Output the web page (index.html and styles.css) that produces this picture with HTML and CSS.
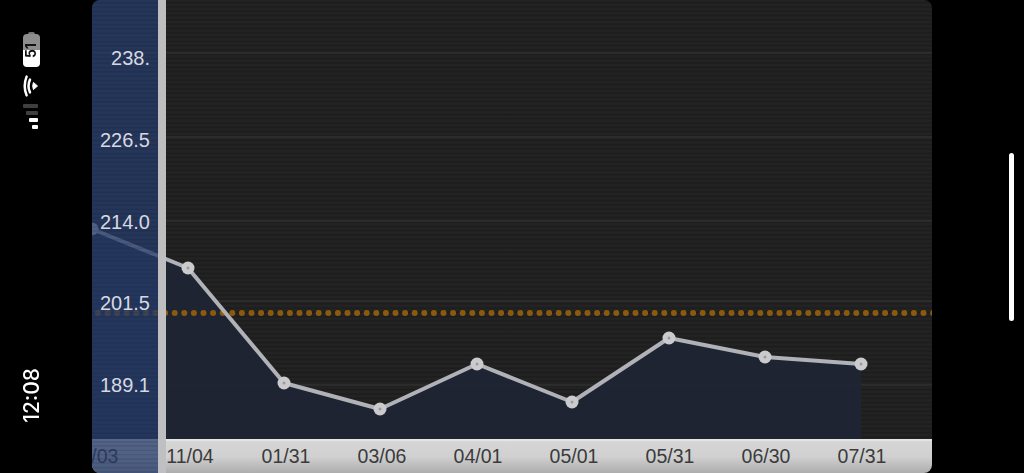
FILE: index.html
```html
<!DOCTYPE html>
<html lang="en">
<head>
<meta charset="utf-8">
<title>Chart</title>
<link rel="stylesheet" href="styles.css">
</head>
<body>
<div class="screen">
  <aside class="status">
    <div class="battery"><span class="battery-nub"></span><span class="battery-level">51</span></div>
    <svg class="wifi" width="18" height="24" viewBox="0 0 18 24" aria-hidden="true">
      <path d="M15.5 12 L11.4 8.4 Q10 12 11.4 15.6 Z" fill="#fff" stroke="#fff" stroke-linejoin="round"/>
      <path d="M8 5.6 Q5 12 8 18.4" fill="none" stroke="#fff" stroke-width="2.5" stroke-linecap="round"/>
      <path d="M4.6 2.6 Q0.8 12 4.6 21.4" fill="none" stroke="#fff" stroke-width="2.5" stroke-linecap="round"/>
    </svg>
    <svg class="signal" width="16" height="26" viewBox="0 0 16 26" aria-hidden="true">
      <rect x="0" y="0" width="15" height="4" rx="1" fill="#3f3f3f"/>
      <rect x="3" y="7" width="12" height="4" rx="1" fill="#3f3f3f"/>
      <rect x="6" y="14" width="9" height="4" rx="1" fill="#fff"/>
      <rect x="9" y="21" width="6" height="4" rx="1" fill="#fff"/>
    </svg>
    <time class="clock">12:08</time>
  </aside>

  <main class="panel">
    <div class="plot">
      <svg class="chart" width="840" height="439" viewBox="92 0 840 439" aria-hidden="true">
        <g class="grid">
          <line x1="92" x2="932" y1="53" y2="53"/>
          <line x1="92" x2="932" y1="137" y2="137"/>
          <line x1="92" x2="932" y1="221" y2="221"/>
          <line x1="92" x2="932" y1="301" y2="301"/>
          <line x1="92" x2="932" y1="385" y2="385"/>
        </g>
        <polygon class="area" points="92,229 188,268 284,383 380,409 477,364 572,402 669,338 765,357 861,364 861,439 92,439"/>
        <line class="limit" x1="97.9" x2="935" y1="313" y2="313"/>
        <polyline class="trend" points="92,229 188,268 284,383 380,409 477,364 572,402 669,338 765,357 861,364"/>
        <g class="marks">
          <circle cx="92" cy="229" r="6.5"/><circle cx="188" cy="268" r="6.5"/><circle cx="284" cy="383" r="6.5"/><circle cx="380" cy="409" r="6.5"/>
          <circle cx="477" cy="364" r="6.5"/><circle cx="572" cy="402" r="6.5"/><circle cx="669" cy="338" r="6.5"/><circle cx="765" cy="357" r="6.5"/><circle cx="861" cy="364" r="6.5"/>
        </g>
        <g class="pips">
          <circle cx="188" cy="268" r="1.5"/><circle cx="284" cy="383" r="1.5"/><circle cx="380" cy="409" r="1.5"/>
          <circle cx="477" cy="364" r="1.5"/><circle cx="572" cy="402" r="1.5"/><circle cx="669" cy="338" r="1.5"/><circle cx="765" cy="357" r="1.5"/><circle cx="861" cy="364" r="1.5"/>
        </g>
      </svg>
    </div>
    <div class="dates">
      <span class="date">10/03</span>
      <span class="date">11/04</span>
      <span class="date">01/31</span>
      <span class="date">03/06</span>
      <span class="date">04/01</span>
      <span class="date">05/01</span>
      <span class="date">05/31</span>
      <span class="date">06/30</span>
      <span class="date">07/31</span>
    </div>
    <div class="scale">
      <span class="tick">238.</span>
      <span class="tick">226.5</span>
      <span class="tick">214.0</span>
      <span class="tick">201.5</span>
      <span class="tick">189.1</span>
    </div>
  </main>

  <aside class="gutter"><span class="home-bar"></span></aside>
</div>
</body>
</html>
```
FILE: styles.css
```css
* { box-sizing: border-box; }

html, body {
  margin: 0;
  height: 100%;
  background: #000;
  overflow: hidden;
}

.screen {
  display: flex;
  width: 1024px;
  height: 473px;
  font-family: "Liberation Sans", Arial, sans-serif;
}

/* Rotated status bar */
.status {
  width: 92px;
  flex: none;
  display: flex;
  flex-direction: column;
  align-items: center;
  padding: 32px 30px 50px 0;
}

.battery {
  position: relative;
  width: 17px;
  height: 33px;
  margin-top: 2px;
  border-radius: 4px;
  background: linear-gradient(#8d8d8d 0 47%, #fff 47% 100%);
  display: flex;
  align-items: center;
  justify-content: center;
}

.battery-nub {
  position: absolute;
  top: -2px;
  left: 5px;
  width: 7px;
  height: 2px;
  border-radius: 2px 2px 0 0;
  background: #777;
}

.battery-level {
  writing-mode: vertical-rl;
  transform: rotate(180deg);
  font-family: "Inter", sans-serif;
  font-size: 14px;
  font-weight: 700;
  line-height: 1;
  color: #111;
}

.wifi { margin-top: 7px; flex: none; }
.signal { margin-top: 6px; flex: none; }

.clock {
  margin-top: auto;
  writing-mode: vertical-rl;
  transform: rotate(180deg);
  font-family: "Inter", sans-serif;
  font-size: 21px;
  font-weight: 500;
  line-height: 1;
  color: #fff;
}

/* Chart panel */
.panel {
  position: relative;
  width: 840px;
  flex: none;
  display: flex;
  flex-direction: column;
  border-radius: 8px;
  overflow: hidden;
}

.plot {
  height: 439px;
  flex: none;
  background: repeating-linear-gradient(#232323 0, #232323 1px, #1d1d1d 2.5px, #1d1d1d 3px, #232323 4.3px);
}

.chart { display: block; }

.grid line { stroke: #303030; stroke-width: 1.5; }
.area { fill: #1e2533; fill-opacity: .92; }

.limit {
  stroke: #8c5a0d;
  stroke-width: 6;
  stroke-linecap: round;
  stroke-dasharray: 0 9.6;
  filter: blur(.4px);
}

.trend {
  fill: none;
  stroke: #b0b2b8;
  stroke-width: 4;
  stroke-linejoin: round;
  filter: blur(.4px);
}

.marks circle { fill: #cbcbcd; }
.marks { filter: blur(.4px); }
.pips circle { fill: #9a9ba1; }

.dates {
  flex: 1;
  display: flex;
  margin-left: -46px;
  border-top: 2px solid #e4e4e4;
  background: linear-gradient(#d6d6d6, #d0d0d0 50%, #adadad);
}

.date {
  width: 96px;
  flex: none;
  text-align: center;
  font-size: 19.5px;
  line-height: 31px;
  color: #3b3b3b;
}

/* Translucent y scale lying over the chart */
.scale {
  position: absolute;
  top: 0;
  bottom: 0;
  left: 0;
  width: 74px;
  display: flex;
  flex-direction: column;
  padding-top: 18px;
  border-right: 8px solid rgba(195, 195, 195, .97);
  background:
    repeating-linear-gradient(rgba(38, 60, 106, .75) 0, rgba(38, 60, 106, .75) 2px, rgba(34, 54, 98, .78) 2.6px, rgba(34, 54, 98, .78) 3.6px, rgba(38, 60, 106, .75) 4.3px);
}

.tick {
  height: 81.75px;
  line-height: 81.75px;
  padding-right: 8px;
  text-align: right;
  font-size: 20px;
  color: #d6d9e1;
}

.gutter {
  flex: 1;
  display: flex;
  align-items: center;
  justify-content: flex-end;
  padding-right: 10px;
}

.home-bar {
  width: 5px;
  height: 168px;
  border-radius: 3px;
  background: #fff;
}
```
